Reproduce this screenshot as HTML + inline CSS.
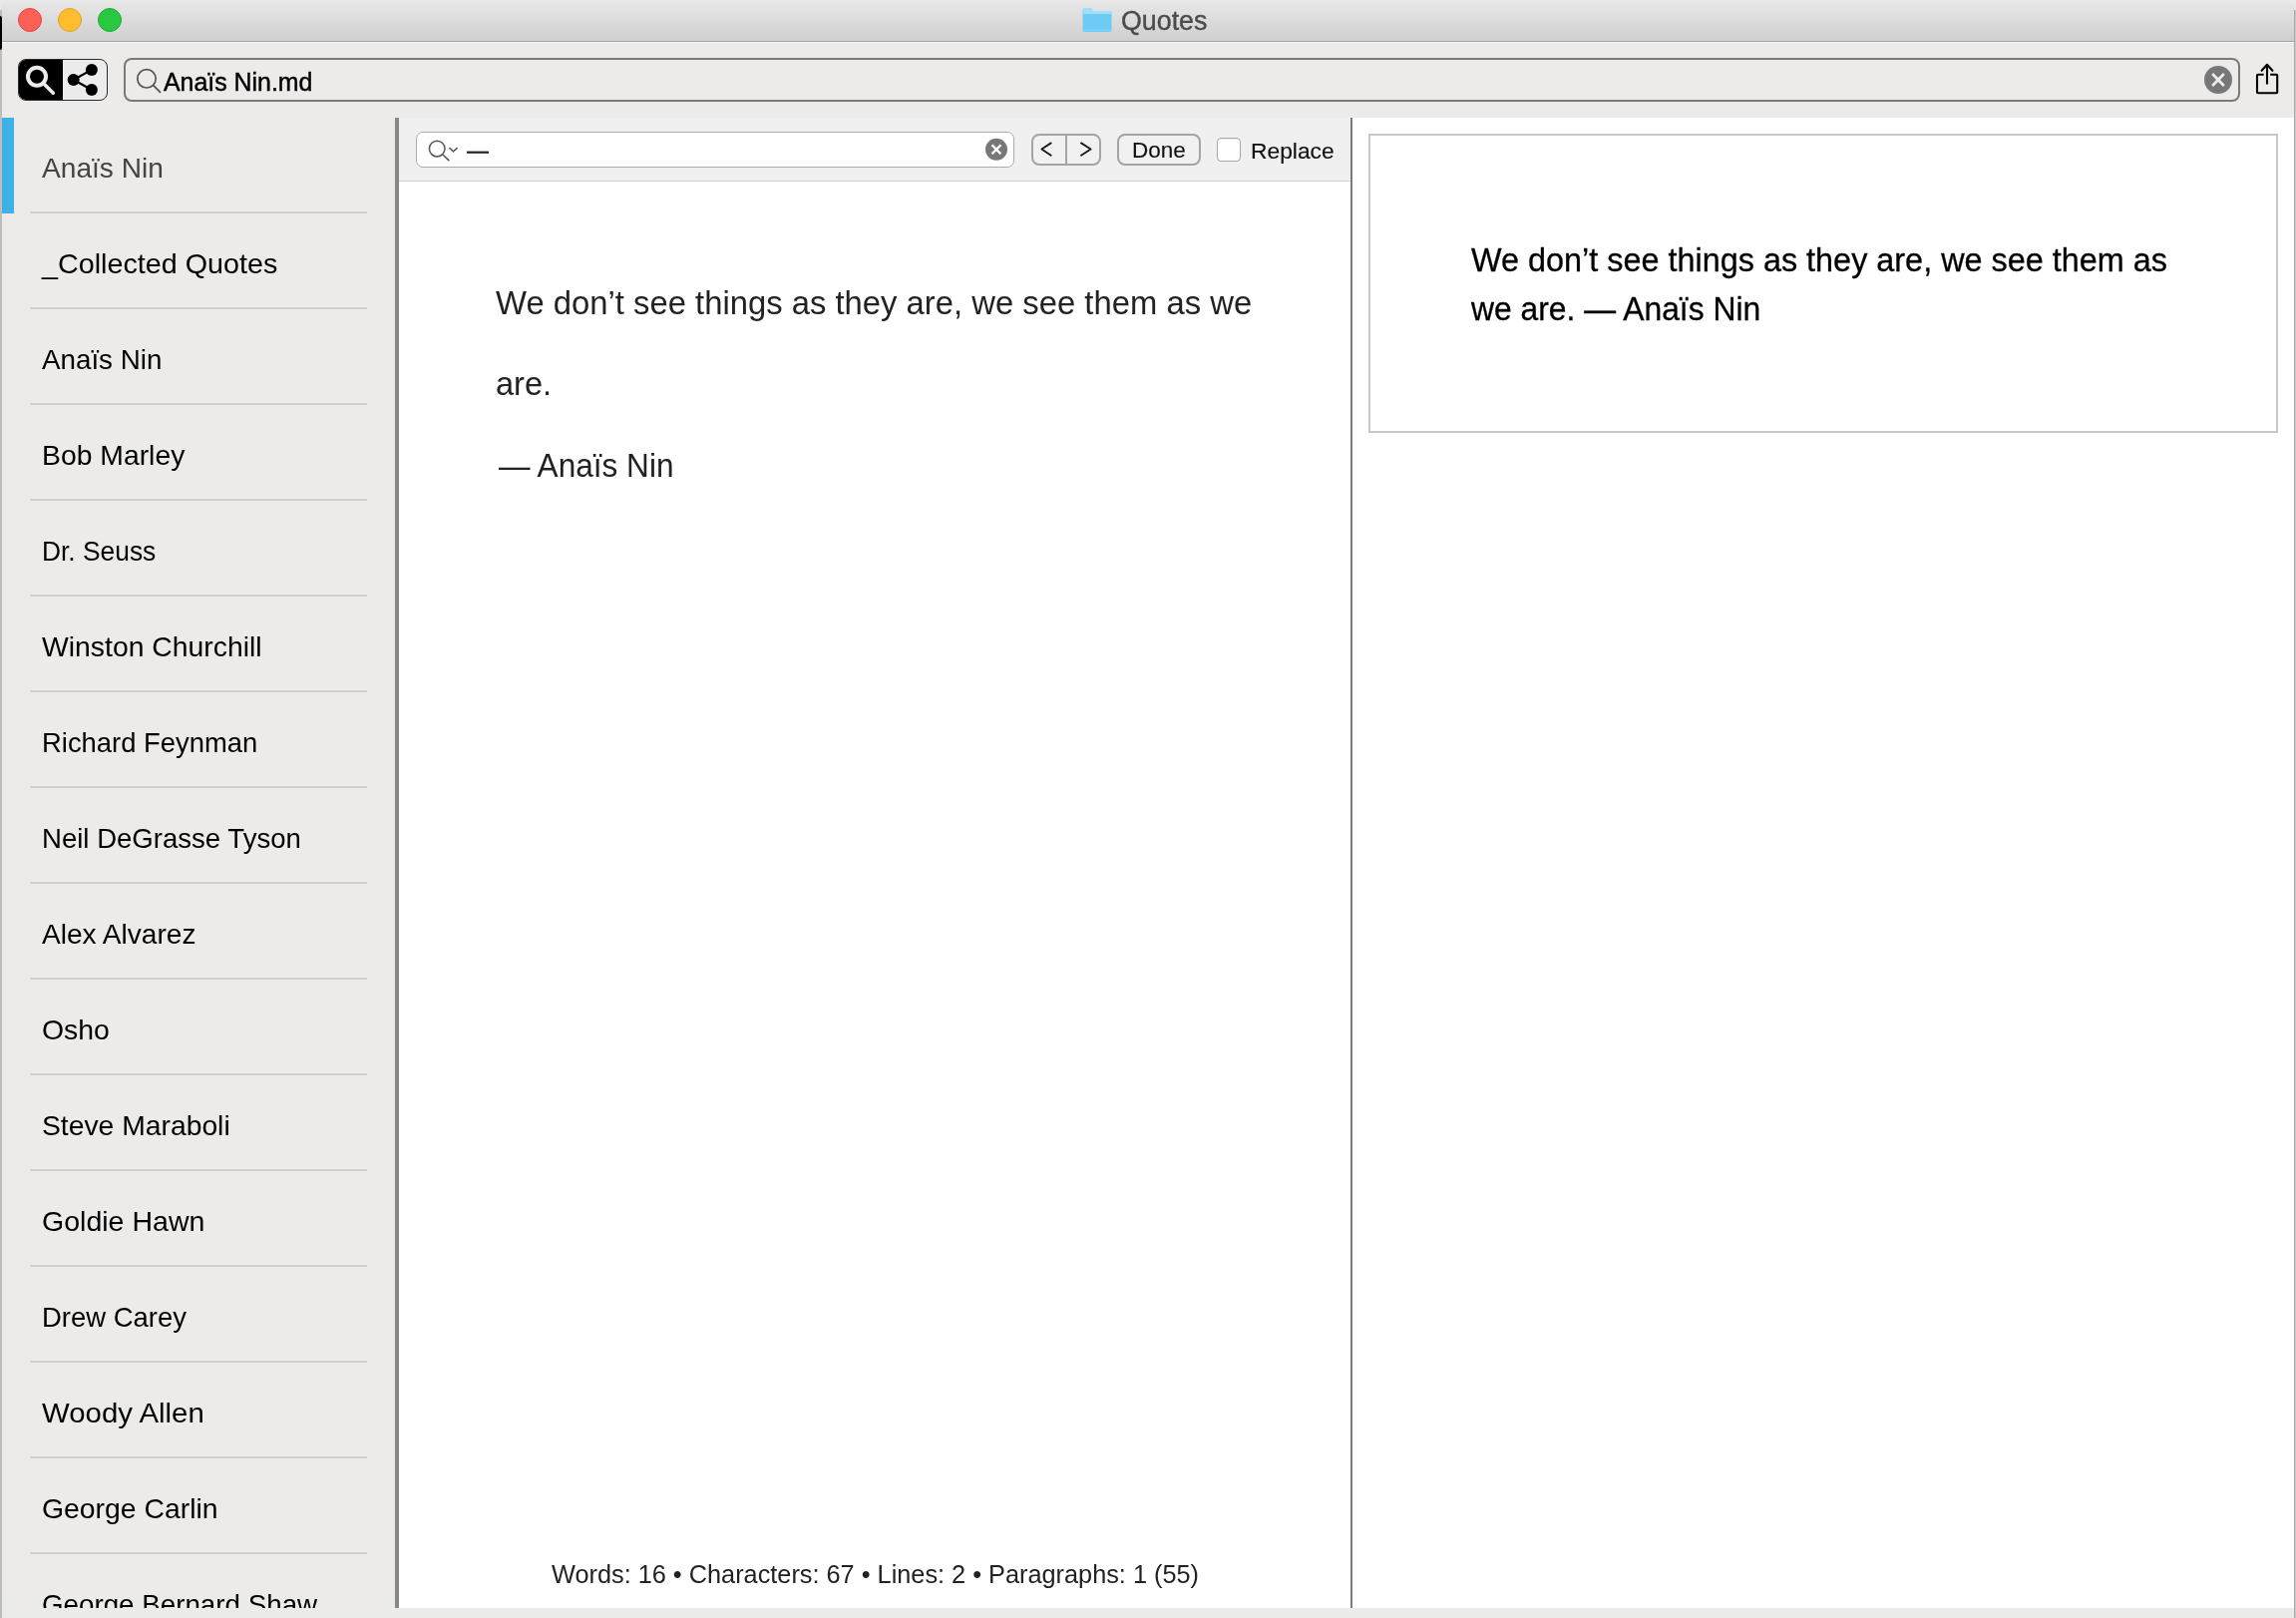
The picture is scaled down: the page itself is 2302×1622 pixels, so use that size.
<!DOCTYPE html>
<html><head><meta charset="utf-8">
<style>
*{box-sizing:border-box;margin:0;padding:0}
html,body{width:2302px;height:1622px;overflow:hidden;background:#e9e9e9;font-family:"Liberation Sans",sans-serif}
.a{position:absolute}
#title,#ttext,#sidebar,#editor,#preview,#stext,#toolbar{will-change:transform}
#title{left:0;top:0;width:2302px;height:42px;background:linear-gradient(#e8e8e8,#cfcfcf);border-bottom:1px solid #a6a6a6;border-radius:12px 12px 0 0}
.tl{width:24px;height:24px;border-radius:50%;top:8px}
#ttext{left:1124px;top:5px;font-size:26.8px;color:#4b4b4b;-webkit-text-stroke:0.4px #4b4b4b;line-height:32px}
#toolbar{left:0;top:42px;width:2302px;height:76px;background:#ecebea;border-top:1px solid #f3f3f3}
#sidebar{left:2px;top:118px;width:394px;height:1494px;background:#ecebea;overflow:hidden}
.row{position:absolute;left:0;width:394px;height:96px}
.row .t{position:absolute;left:40px;top:35px;transform-origin:0 0;font-size:28px;line-height:32px;color:#000;white-space:nowrap}
.row.sel .t{color:#444}
.row .sep{position:absolute;left:28px;top:94px;width:338px;height:2px;background:#d0d0d0}
#div1{left:396px;top:118px;width:4px;height:1494px;background:#878787}
#editor{left:400px;top:118px;width:954px;height:1494px;background:#fff}
#findbar{left:0;top:0;width:954px;height:64px;background:#f0f0f0;border-bottom:1px solid #cfcfcf}
#div2{left:1354px;top:118px;width:2px;height:1494px;background:#7c7c7c}
#preview{left:1356px;top:118px;width:944px;height:1494px;background:#fff}
#pbox{left:16px;top:16px;width:912px;height:300px;border:2px solid #c8c8c8}
.etx,.ptx,.stat{transform-origin:0 0}
.etx{font-size:32.6px;line-height:40px;color:#222;white-space:nowrap}
.stat{font-size:25.3px;line-height:30px;color:#222;white-space:nowrap}
.ptx{font-size:32.3px;line-height:48px;color:#000;white-space:nowrap;-webkit-text-stroke:0.3px #000}
#bottom{left:0;top:1612px;width:2302px;height:10px;background:#ebebea}
#lb{left:0;top:10px;width:2px;height:1612px;background:#bdbdbd}
#rb{left:2300px;top:10px;width:2px;height:1612px;background:linear-gradient(90deg,#a8a8a8 50%,#c8c8c8 50%)}
</style></head><body>
<div id="title" class="a"></div>
<div class="a tl" style="left:18px;background:#fe5f57;border:1px solid #e1463f"></div>
<div class="a tl" style="left:58px;background:#febc2e;border:1px solid #e0a028"></div>
<div class="a tl" style="left:98px;background:#28c840;border:1px solid #1eaa32"></div>
<svg class="a" style="left:1084px;top:7px" width="32" height="27">
<path d="M1.5 3 Q1.5 1 3.5 1 H9.5 Q10.5 1 11.5 2.5 L12.5 4 H28.5 Q30.5 4 30.5 6 V23 Q30.5 25 28.5 25 H3.5 Q1.5 25 1.5 23 Z" fill="#6ecbf5"/>
<path d="M1.5 3 Q1.5 1 3.5 1 H9.5 Q10.5 1 11.5 2.5 L12.5 4 H28.5 Q30.5 4 30.5 6 V7 H1.5 Z" fill="#a3def9"/>
<rect x="1.5" y="22.5" width="29" height="1" fill="#8fd6f7"/>
</svg>
<div id="ttext" class="a">Quotes</div>
<div id="toolbar" class="a"></div>
<div class="a" style="left:18px;top:59px;width:90px;height:42px;border:1px solid #2b2b2b;border-radius:8px;background:#ececec;overflow:hidden"><div class="a" style="left:0;top:0;width:44px;height:40px;background:#000"></div></div>
<svg class="a" style="left:0;top:0" width="130" height="110">
<circle cx="37" cy="76.8" r="9" fill="none" stroke="#ececec" stroke-width="4"/>
<line x1="44.5" y1="84.5" x2="53.3" y2="93.2" stroke="#ececec" stroke-width="3.6" stroke-linecap="round"/>
<line x1="73.7" y1="80" x2="91.9" y2="69.9" stroke="#000" stroke-width="2.2"/>
<line x1="73.7" y1="80" x2="91.9" y2="90" stroke="#000" stroke-width="2.2"/>
<circle cx="91.9" cy="69.9" r="6" fill="#000"/>
<circle cx="73.7" cy="80" r="6" fill="#000"/>
<circle cx="91.9" cy="90" r="6" fill="#000"/>
</svg>
<div class="a" style="left:124px;top:58px;width:2122px;height:44px;border:2px solid #7a7a7a;border-radius:8px;background:#ecebea"></div>
<svg class="a" style="left:120px;top:50px" width="60" height="60">
<circle cx="27" cy="28.8" r="9.2" fill="none" stroke="#555" stroke-width="1.7"/>
<line x1="33.6" y1="35.4" x2="41" y2="42.8" stroke="#555" stroke-width="1.8"/>
</svg>
<div class="a" id="stext" style="left:164px;top:67px;-webkit-text-stroke:0.45px #000;font-size:24.9px;line-height:30px;color:#000;white-space:nowrap">Anaïs Nin.md</div>
<svg class="a" style="left:2200px;top:55px" width="100" height="50">
<circle cx="24" cy="25" r="14" fill="#777"/>
<line x1="18.2" y1="19" x2="29.8" y2="31" stroke="#eee" stroke-width="2.6"/>
<line x1="29.8" y1="19" x2="18.2" y2="31" stroke="#eee" stroke-width="2.6"/>
<path d="M69.7 19.8 H64 Q63 19.8 63 20.8 V37.2 Q63 38.2 64 38.2 H82.2 Q83.2 38.2 83.2 37.2 V20.8 Q83.2 19.8 82.2 19.8 H76.2" fill="none" stroke="#000" stroke-width="2.1"/>
<line x1="73" y1="10" x2="73" y2="28.7" stroke="#000" stroke-width="2.1" stroke-linecap="round"/>
<path d="M67.6 15.8 L73 9.8 L78.4 15.8" fill="none" stroke="#000" stroke-width="2.1" stroke-linecap="round" stroke-linejoin="round"/>
</svg>
<div id="sidebar" class="a"><div class="a" style="left:0;top:0;width:12px;height:96px;background:#3fb0e8"></div>
<div class="row sel" style="top:0px"><div class="t" style="transform:scaleX(1.0042)">Anaïs Nin</div><div class="sep"></div></div>
<div class="row" style="top:96px"><div class="t" style="transform:scaleX(1.0263)">_Collected Quotes</div><div class="sep"></div></div>
<div class="row" style="top:192px"><div class="t" style="transform:scaleX(0.9916)">Anaïs Nin</div><div class="sep"></div></div>
<div class="row" style="top:288px"><div class="t" style="transform:scaleX(1.0121)">Bob Marley</div><div class="sep"></div></div>
<div class="row" style="top:384px"><div class="t" style="transform:scaleX(0.9417)">Dr. Seuss</div><div class="sep"></div></div>
<div class="row" style="top:480px"><div class="t" style="transform:scaleX(1.0126)">Winston Churchill</div><div class="sep"></div></div>
<div class="row" style="top:576px"><div class="t" style="transform:scaleX(0.9789)">Richard Feynman</div><div class="sep"></div></div>
<div class="row" style="top:672px"><div class="t" style="transform:scaleX(0.9843)">Neil DeGrasse Tyson</div><div class="sep"></div></div>
<div class="row" style="top:768px"><div class="t" style="transform:scaleX(1.0026)">Alex Alvarez</div><div class="sep"></div></div>
<div class="row" style="top:864px"><div class="t" style="transform:scaleX(1.0138)">Osho</div><div class="sep"></div></div>
<div class="row" style="top:960px"><div class="t" style="transform:scaleX(1.0103)">Steve Maraboli</div><div class="sep"></div></div>
<div class="row" style="top:1056px"><div class="t" style="transform:scaleX(1.019)">Goldie Hawn</div><div class="sep"></div></div>
<div class="row" style="top:1152px"><div class="t" style="transform:scaleX(0.981)">Drew Carey</div><div class="sep"></div></div>
<div class="row" style="top:1248px"><div class="t" style="transform:scaleX(1.0493)">Woody Allen</div><div class="sep"></div></div>
<div class="row" style="top:1344px"><div class="t" style="transform:scaleX(1.0128)">George Carlin</div><div class="sep"></div></div>
<div class="row" style="top:1440px"><div class="t" style="transform:scaleX(0.991)">George Bernard Shaw</div><div class="sep"></div></div>
</div>
<div id="div1" class="a"></div>
<div id="editor" class="a"><div id="findbar" class="a"></div>
<div class="a" style="left:17px;top:14px;width:600px;height:36px;border:1px solid #acacac;border-radius:7px;background:#fff"></div>
<svg class="a" style="left:10px;top:7px" width="100" height="50">
<circle cx="28.2" cy="24.1" r="7.8" fill="none" stroke="#555" stroke-width="1.5"/>
<line x1="33.9" y1="30" x2="40.4" y2="36.1" stroke="#555" stroke-width="1.6"/>
<path d="M40.4 23.1 L44.5 26.7 L48.6 23.1" fill="none" stroke="#555" stroke-width="1.5"/>
<rect x="58" y="26.6" width="22" height="2.2" fill="#222"/>
</svg>
<svg class="a" style="left:580px;top:14px" width="40" height="40">
<circle cx="19" cy="17.8" r="11" fill="#777"/>
<line x1="14.6" y1="13.4" x2="23.4" y2="22.2" stroke="#fff" stroke-width="2.3"/>
<line x1="23.4" y1="13.4" x2="14.6" y2="22.2" stroke="#fff" stroke-width="2.3"/>
</svg>
<div class="a" style="left:634px;top:16px;width:70px;height:32px;border:2px solid #a4a4a4;border-radius:8px;background:#f1f1f1"></div>
<div class="a" style="left:668px;top:17px;width:2px;height:30px;background:#a4a4a4"></div>
<svg class="a" style="left:634px;top:16px" width="70" height="32">
<path d="M19.7 9.4 L10.4 15.5 L19.7 21.8" fill="none" stroke="#1a1a1a" stroke-width="1.9" stroke-linecap="round" stroke-linejoin="round"/>
<path d="M50 9.4 L59.6 15.5 L50 21.8" fill="none" stroke="#1a1a1a" stroke-width="1.9" stroke-linecap="round" stroke-linejoin="round"/>
</svg>
<div class="a" style="left:720px;top:16px;width:84px;height:32px;border:2px solid #a4a4a4;border-radius:8px;background:#f1f1f1"></div>
<div class="a" id="done" style="left:735px;top:19px;-webkit-text-stroke:0.15px #111;font-size:22.5px;line-height:28px;color:#111;white-space:nowrap">Done</div>
<div class="a" style="left:820px;top:20px;width:24px;height:24px;border:1px solid #a8a8a8;border-radius:4px;background:#fff;box-shadow:inset 0 1px 1px rgba(0,0,0,0.08)"></div>
<div class="a" id="repl" style="left:854px;top:19px;-webkit-text-stroke:0.15px #111;font-size:22.8px;line-height:28px;color:#111;white-space:nowrap">Replace</div>
<div class="a etx" style="left:97px;top:166px;transform:scaleX(1.0072)">We don’t see things as they are, we see them as we</div>
<div class="a etx" style="left:97px;top:247px">are.</div>
<div class="a etx" style="left:100px;top:329px;transform:scaleX(0.969)">— Anaïs Nin</div>
<div class="a stat" style="left:153px;top:1445px">Words: 16 • Characters: 67 • Lines: 2 • Paragraphs: 1 (55)</div>
</div>
<div id="div2" class="a"></div>
<div id="preview" class="a"><div id="pbox" class="a">
<div class="a ptx" style="left:101px;top:101px;transform:scaleX(1.0029)">We don’t see things as they are, we see them as</div>
<div class="a ptx" style="left:101px;top:150px;transform:scaleX(0.986)">we are. — Anaïs Nin</div>
</div></div>
<div id="bottom" class="a"></div>
<div id="lb" class="a"></div>
<div id="rb" class="a"></div>
<div class="a" style="left:0;top:16px;width:2px;height:34px;background:#000;border-radius:0 2px 2px 0"></div>
</body></html>
